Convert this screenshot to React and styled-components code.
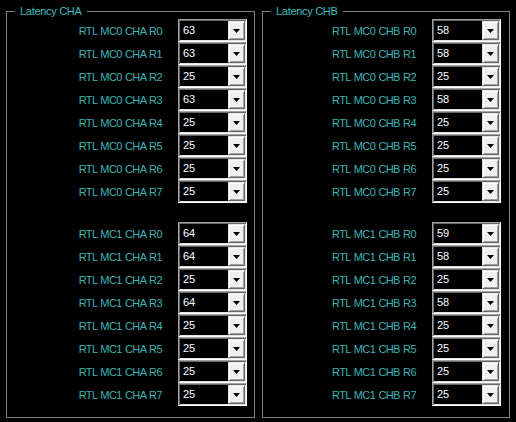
import React from "react";
import styled, { createGlobalStyle } from "styled-components";

const Global = createGlobalStyle`
  html, body { margin: 0; padding: 0; background: #000; }
  body { font-family: "Liberation Sans", Arial, sans-serif; }
`;

const Page = styled.div`
  display: flex;
  gap: 7px;
  padding: 0 0 0 6px;
  width: 516px;
  height: 422px;
  box-sizing: border-box;
  background: #000;
`;

const Group = styled.fieldset`
  margin: 5px 0 0 0;
  padding: 0 ${(p) => p.$padRight}px 0 0;
  width: ${(p) => p.$width}px;
  height: 413px;
  box-sizing: border-box;
  border: 1px solid #808080;
  display: flex;
  flex-direction: column;
  min-width: 0;
`;

const Title = styled.legend`
  margin-left: 8px;
  padding: 0 5px;
  font-size: 11px;
  line-height: 13px;
  letter-spacing: -0.3px;
  color: #3fbcbc;
`;

const Block = styled.div`
  display: flex;
  flex-direction: column;
  margin-top: ${(p) => p.$top}px;
`;

const Row = styled.div`
  display: flex;
  justify-content: flex-end;
  align-items: center;
  gap: 16px;
  height: 23px;
`;

const Label = styled.span`
  font-size: 11px;
  letter-spacing: -0.6px;
  word-spacing: 0.8px;
  color: #3cb4b4;
  white-space: nowrap;
`;

const Combo = styled.div`
  width: 69px;
  height: 23px;
  box-sizing: border-box;
  display: flex;
  background: #000;
  border-top: 1px solid #a0a0a0;
  border-left: 1px solid #a0a0a0;
  border-right: 1px solid #ffffff;
  border-bottom: 1px solid #ffffff;
  box-shadow: inset 1px 1px 0 #696969, inset -1px -1px 0 #e3e3e3;
  padding: 1px;
`;

const Value = styled.span`
  flex: 1;
  color: #fff;
  font-size: 11px;
  line-height: 19px;
  padding-left: 3px;
`;

const Button = styled.div`
  width: 17px;
  height: 19px;
  box-sizing: border-box;
  background: #f0f0f0;
  display: flex;
  align-items: center;
  justify-content: center;
  border-top: 1px solid #e3e3e3;
  border-left: 1px solid #e3e3e3;
  border-right: 1px solid #696969;
  border-bottom: 1px solid #696969;
  box-shadow: inset 1px 1px 0 #fff, inset -1px -1px 0 #a0a0a0;
`;

const Arrow = () => (
  <svg width="7" height="4" viewBox="0 0 7 4" style={{ marginTop: 1 }}>
    <path d="M0 0H7L3.5 4Z" fill="#000" />
  </svg>
);

const data = {
  A: [
    ["63", "63", "25", "63", "25", "25", "25", "25"],
    ["64", "64", "25", "64", "25", "25", "25", "25"],
  ],
  B: [
    ["58", "58", "25", "58", "25", "25", "25", "25"],
    ["59", "58", "25", "58", "25", "25", "25", "25"],
  ],
};

function Channel({ ch, width, padRight }) {
  return (
    <Group $width={width} $padRight={padRight}>
      <Title>Latency CH{ch}</Title>
      {data[ch].map((vals, mc) => (
        <Block key={mc} $top={mc === 0 ? 1 : 19}>
          {vals.map((v, r) => (
            <Row key={r}>
              <Label>
                RTL MC{mc} CH{ch} R{r}
              </Label>
              <Combo>
                <Value>{v}</Value>
                <Button>
                  <Arrow />
                </Button>
              </Combo>
            </Row>
          ))}
        </Block>
      ))}
    </Group>
  );
}

export default function App() {
  return (
    <>
      <Global />
      <Page>
        <Channel ch="A" width={249} padRight={7} />
        <Channel ch="B" width={248} padRight={8} />
      </Page>
    </>
  );
}
